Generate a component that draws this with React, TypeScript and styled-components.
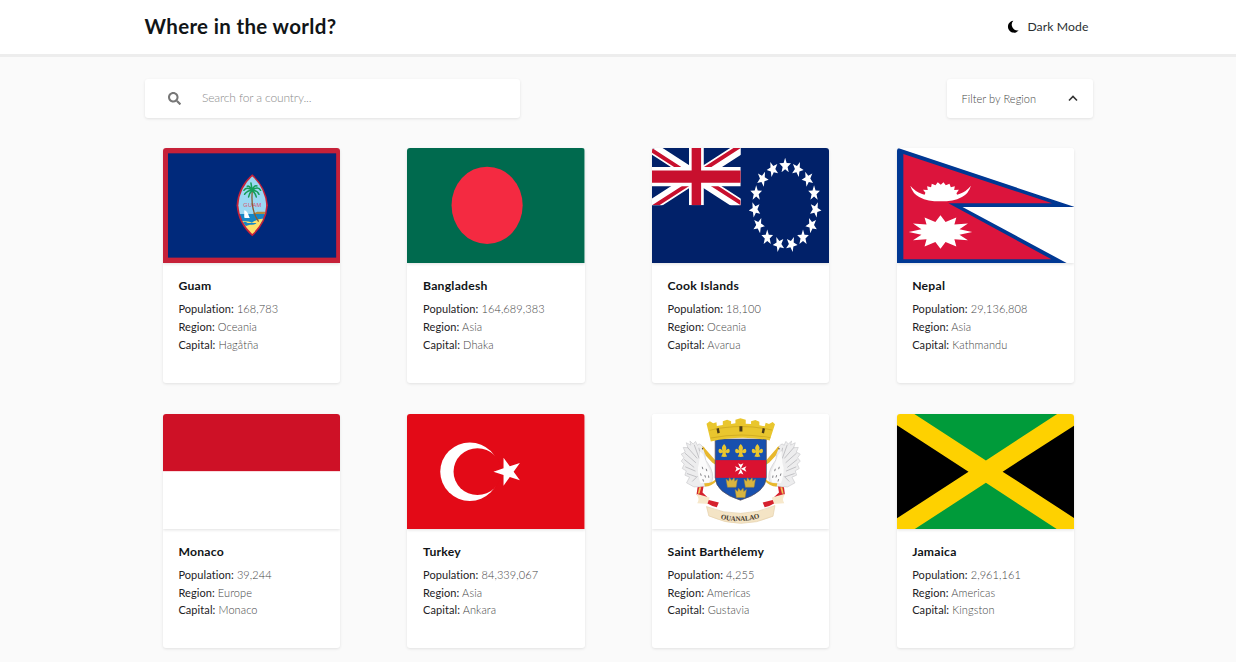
import React from "react";
import styled, { createGlobalStyle } from "styled-components";
import { FaSearch } from "react-icons/fa";

const GlobalStyle = createGlobalStyle`
  *, *::before, *::after { box-sizing: border-box; }
  html, body { margin: 0; height: 100%; overflow: hidden; }
  body {
    background: #fafafa;
    color: #111517;
    font-family: Lato, "Open Sans", sans-serif;
  }
`;

const Page = styled.div`
  height: 662px;
  overflow: hidden;
`;

const Header = styled.header`
  height: 57px;
  padding: 0 147.5px 3px 144.5px;
  border-bottom: 3px solid #ededed;
  background: #fff;
  display: flex;
  align-items: center;
  justify-content: space-between;
`;

const Title = styled.h1`
  margin: 0;
  font-size: 20.5px;
  line-height: 28px;
  font-weight: 700;
  letter-spacing: 0.34px;
  white-space: nowrap;
`;

const ModeToggle = styled.button`
  border: 0;
  padding: 2px 0 0;
  background: none;
  font-family: inherit;
  font-size: 12.2px;
  line-height: 18px;
  letter-spacing: 0.1px;
  color: #2b2f32;
  display: flex;
  align-items: center;
  gap: 8px;
  white-space: nowrap;
`;

const Toolbar = styled.div`
  padding: 22px 143px 0 145px;
  display: flex;
  justify-content: space-between;
`;

const Field = styled.div<{ $width: number }>`
  width: ${(p) => p.$width}px;
  height: 39px;
  border-radius: 3px;
  background: #fff;
  box-shadow: 0 1px 3px rgba(0, 0, 0, 0.1);
  display: flex;
  align-items: center;
`;

const SearchField = styled(Field)`
  padding: 0 0 1px 23px;
  gap: 21px;
  color: #777;
`;

const SearchInput = styled.input`
  border: 0;
  padding: 0;
  outline: 0;
  flex: 1;
  background: none;
  font: 300 12px/18px Lato, sans-serif;
  letter-spacing: -0.13px;
  &::placeholder { color: #8c8c8c; opacity: 1; }
`;

const RegionFilter = styled(Field)`
  padding: 0 15px 1px 15px;
  justify-content: space-between;
  font-size: 11px;
  font-weight: 300;
  letter-spacing: 0.06px;
  color: #444;
`;

const Grid = styled.main`
  padding: 30px 0 0 162.8px;
  display: grid;
  grid-template-columns: repeat(4, 177.5px);
  column-gap: 67.1px;
  row-gap: 31px;
`;

const Card = styled.article`
  height: 234.6px;
  border-radius: 3px;
  background: #fff;
  box-shadow: 0 1px 3px rgba(0, 0, 0, 0.1);
  overflow: hidden;
`;

const Flag = styled.svg`
  display: block;
  width: 100%;
  height: 115.3px;
  box-shadow: 0 1px 3px rgba(0, 0, 0, 0.12);
`;

const Details = styled.div`
  padding: 14px 0 0 15.6px;
`;

const Name = styled.h2`
  margin: 0 0 5px;
  font-size: 12.2px;
  line-height: 18px;
  font-weight: 700;
  letter-spacing: 0.24px;
  white-space: nowrap;
`;

const Fact = styled.p`
  margin: 0;
  font-size: 11px;
  line-height: 17.7px;
  font-weight: 300;
  letter-spacing: 0.08px;
  color: #444;
  white-space: nowrap;
`;

const Label = styled.span`
  font-weight: 400;
  color: #1d2124;
`;

function starPoints(cx: number, cy: number, r: number, start = -90, tips = 5, ratio = 0.382) {
  return Array.from({ length: tips * 2 }, (_, i) => {
    const a = ((start + (i * 180) / tips) * Math.PI) / 180;
    const q = i % 2 ? r * ratio : r;
    return `${(cx + q * Math.cos(a)).toFixed(2)},${(cy + q * Math.sin(a)).toFixed(2)}`;
  }).join(" ");
}

const MoonIcon = () => (
  <svg width="12" height="13" viewBox="0 0 36 39" fill="#000">
    <path d="M19 2A18 18 0 1 0 35 31A17.500 17.500 0 0 1 19 2Z" />
  </svg>
);

const GuamFlag = () => (
  <Flag viewBox="24 24 531 346" preserveAspectRatio="none">
    <rect x="24" y="24" width="531" height="346" fill="#c62139" />
    <rect x="39" y="40" width="503" height="313" fill="#00297b" />
    <clipPath id="seal"><path d="M291 109Q329 144 333 196Q329 247 291 282Q253 247 249 196Q253 144 291 109Z" /></clipPath>
    <path d="M291 103Q333 140 338 196Q333 252 291 289Q248 252 244 196Q248 140 291 103Z" fill="#c62139" />
    <g clipPath="url(#seal)">
      <rect x="244" y="103" width="94" height="120" fill="#9bd8f2" />
      <rect x="244" y="222" width="94" height="30" fill="#1686c6" />
      <path d="M293 221L306 215H338V222H293Z" fill="#b48b3c" />
      <path d="M244 244Q278 241 290 248Q312 232 338 237V292H244Z" fill="#ffe06a" />
      <path d="M258 247Q270 243 277 249L304 249Q297 256 284 254L272 258Z" fill="#1686c6" />
      <path d="M267 230V211Q276 211 282 231L284 234H268Z" fill="#fff" />
      <text x="264" y="202" fontFamily="Liberation Sans" fontSize="17" textLength="54" fill="#dc4f6c">GUAM</text>
      <path d="M291 153Q286 211 310 245" fill="none" stroke="#8b5c32" strokeWidth="4" />
      <g fill="none" stroke="#159c57" strokeWidth="4.5" strokeLinecap="round">
        <path d="M291 151Q274 139 266 151M291 151Q309 137 316 151M291 151Q277 151 268 163M291 151Q307 151 311 163M291 151Q281 160 280 171M291 151Q301 160 303 171M291 151L287 129M291 151Q281 135 276 139M291 151Q297 134 305 138" />
      </g>
    </g>
  </Flag>
);

const BangladeshFlag = () => (
  <Flag viewBox="21 24 534 346" preserveAspectRatio="none">
    <rect x="21" y="24" width="534" height="346" fill="#006a4e" />
    <ellipse cx="262" cy="196" rx="107" ry="116" fill="#f42a41" />
  </Flag>
);

const CookIslandsFlag = () => (
  <Flag viewBox="21 24 534 346" preserveAspectRatio="none">
    <rect x="21" y="24" width="534" height="346" fill="#012169" />
    <svg x="21" y="24" width="267" height="172" viewBox="0 0 60 30" preserveAspectRatio="none">
      <clipPath id="saltire"><path d="M30 15H60V30ZM30 15V30H0ZM30 15H0V0ZM30 15V0H60Z" /></clipPath>
      <path d="M0 0L60 30M60 0L0 30" stroke="#fff" strokeWidth="6.4" />
      <path d="M0 0L60 30M60 0L0 30" stroke="#c8102e" strokeWidth="4.4" clipPath="url(#saltire)" />
      <path d="M30 0V30M0 15H60" stroke="#fff" strokeWidth="10" />
      <path d="M30 0V30M0 15H60" stroke="#c8102e" strokeWidth="6.4" />
    </svg>
    <g transform="translate(421.5 196.5) scale(1 1.3)" fill="#fff">
      {Array.from({ length: 15 }, (_, i) => (
        <polygon key={i} points={starPoints(0, -91.5, 18.5, -90, 5, 0.42)} transform={`rotate(${i * 24})`} />
      ))}
    </g>
  </Flag>
);

const NepalFlag = () => (
  <Flag viewBox="36 24 531 346" preserveAspectRatio="none">
    <rect x="36" y="24" width="531" height="346" fill="#fff" />
    <path d="M36 23L567 201H232L545 370H36Z" fill="#003893" />
    <path d="M55 42L500 190H190L498 358H55Z" fill="#dc143c" />
    <path d="M76 137Q101 170 167 170Q233 170 257 137Q245 184 166 184Q88 184 76 137Z" fill="#fff" />
    <path d="M117 168L121 158L114 149L128 150L126 139L138 142L140 131L151 136L158 127L167 134L175 127L182 136L193 131L197 142L209 139L207 150L221 149L214 160L217 168Q167 184 117 168Z" fill="#fff" />
    <g transform="translate(166 276) scale(1 .53)">
      <polygon points={starPoints(0, 0, 95, -90, 12, 0.62)} fill="#fff" />
    </g>
  </Flag>
);

const MonacoFlag = () => (
  <Flag viewBox="0 0 534 345" preserveAspectRatio="none">
    <rect width="534" height="345" fill="#fff" />
    <rect width="534" height="171" fill="#ce1126" />
  </Flag>
);

const TurkeyFlag = () => (
  <Flag viewBox="21 26 534 345" preserveAspectRatio="none">
    <rect x="21" y="26" width="534" height="345" fill="#e30a17" />
    <ellipse cx="210" cy="198.5" rx="89" ry="87.5" fill="#fff" />
    <ellipse cx="233" cy="198.5" rx="72" ry="70" fill="#e30a17" />
    <polygon points={starPoints(325, 198.5, 44, 180)} fill="#fff" />
  </Flag>
);

const Pelican = () => (
  <g>
    <path d="M97 108Q87 97 83 106L77 94L70 102L60 93L63 105L49 98L54 113L40 112L46 126L34 132L42 143L34 153L43 162L37 175L49 182L45 195L59 201L50 218L72 230L99 229Q119 229 127 211Q133 190 117 164Q104 151 105 133Q109 118 97 108Z" fill="#ededee" stroke="#c9c9cc" strokeWidth="2" />
    <path d="M53 112L82 145M45 129L78 158M43 148L73 172M46 170L77 183M51 190L80 200M73 104L88 145M87 113L93 142M67 214L83 198" fill="none" stroke="#b9b9bd" strokeWidth="2.5" />
    <path d="M89 122Q91 151 84 173Q84 200 92 219L118 216Q129 194 112 166L100 133Z" fill="#fbfbfb" />
    <path d="M97 170L99 177M109 176L111 183M92 190L94 197M105 195L107 202M116 196L117 203M99 207L101 214" stroke="#68686c" strokeWidth="2.5" />
    <path d="M97 110Q101 107 106 116L137 151V164L127 157L108 137Z" fill="#e8b82d" />
    <path d="M103 219Q126 220 137 208L139 213Q127 228 105 229Z" fill="#e8b82d" />
    <circle cx="98" cy="116" r="2" fill="#443a30" />
  </g>
);

const RibbonEnd = () => (
  <g>
    <path d="M83 231L101 229L98 247L114 262L105 270L80 253Z" fill="#d5212e" />
    <path d="M88 231L94 231L89 250L84 251Z" fill="#f0c75a" />
    <path d="M79 251L119 262L116 281L82 279Q91 267 79 251Z" fill="#f7e8cb" />
    <path d="M117 269L147 277L141 291Q125 288 113 280Z" fill="#d5212e" />
  </g>
);

const crown = "M-17 -10L-9 -4L-7 -14L0 -6L7 -14L9 -4L17 -10L13 14H-13Z";
const lily = "M0 -20Q11 -9 4 0Q16 -12 17 1Q17 9 8 7L5 5L5 10L9 17L0 19L-9 17L-5 10L-5 5L-8 7Q-17 9 -17 1Q-16 -12 -4 0Q-11 -9 0 -20Z";

const SaintBarthFlag = () => (
  <Flag viewBox="-54 12 534 345" preserveAspectRatio="none">
    <rect x="-54" y="12" width="534" height="345" fill="#fff" />
    <Pelican />
    <RibbonEnd />
    <g transform="matrix(-1 0 0 1 426 0)">
      <Pelican />
      <RibbonEnd />
    </g>
    <path d="M110 289Q212 331 316 286L310 318Q213 361 117 317Z" fill="#f4e4c5" stroke="#e4cfa9" strokeWidth="2" />
    <path id="motto" d="M152 325Q213 342 277 320" fill="none" />
    <text fontFamily="Liberation Serif" fontWeight="700" fontSize="21" fill="#43382c">
      <textPath href="#motto" textLength="120">OUANALAO</textPath>
    </text>
    <path d="M136 87H290V202Q288 247 212 270Q138 247 136 202Z" fill="#1850ae" stroke="#594b50" strokeWidth="2" />
    <rect x="137" y="150" width="152" height="53" fill="#da1230" />
    <path d="M110 41L120 34L130 40L140 37L141 48L159 45V34L172 29L184 34V42L197 40V29L212 25L228 29V41L244 42V34L257 30L269 35V46L285 49L288 38L298 42L309 36L316 43L300 91Q213 74 123 94Z" fill="#e9c62e" />
    <path d="M119 61Q213 39 307 60M123 84Q213 66 302 83" stroke="#d3ae23" strokeWidth="3" fill="none" />
    <path d="M140 56L147 54L150 68L143 70ZM209 49H218V64H209ZM279 54L286 56L283 70L276 68Z" fill="#4a3b18" />
    {[163, 213, 263].map((x) => (
      <path key={x} d={lily} transform={`translate(${x} 122)`} fill="#e9c62e" />
    ))}
    <path d="M213 176L205 159L213 163L221 159ZM213 176L230 168L226 176L230 185ZM213 176L221 193L213 189L205 193ZM213 176L196 185L200 176L196 168Z" fill="#fff" />
    <g fill="#d8b540" stroke="#a88b35" strokeWidth="1.5">
      <path d={crown} transform="translate(186 217)" />
      <path d={crown} transform="translate(240 217)" />
      <path d={crown} transform="translate(213 248)" />
    </g>
  </Flag>
);

const JamaicaFlag = () => (
  <Flag viewBox="36 26 531 345" preserveAspectRatio="none">
    <rect x="36" y="26" width="531" height="345" fill="#fed100" />
    <path d="M88 26H515L302 165ZM88 371H515L302 232Z" fill="#009b3a" />
    <path d="M36 60L250 198.500L36 338ZM567 60L352 198.500L567 338Z" fill="#000" />
  </Flag>
);

const countries = [
  { name: "Guam", population: "168,783", region: "Oceania", capital: "Hagåtña", Art: GuamFlag },
  { name: "Bangladesh", population: "164,689,383", region: "Asia", capital: "Dhaka", Art: BangladeshFlag },
  { name: "Cook Islands", population: "18,100", region: "Oceania", capital: "Avarua", Art: CookIslandsFlag },
  { name: "Nepal", population: "29,136,808", region: "Asia", capital: "Kathmandu", Art: NepalFlag },
  { name: "Monaco", population: "39,244", region: "Europe", capital: "Monaco", Art: MonacoFlag },
  { name: "Turkey", population: "84,339,067", region: "Asia", capital: "Ankara", Art: TurkeyFlag },
  { name: "Saint Barthélemy", population: "4,255", region: "Americas", capital: "Gustavia", Art: SaintBarthFlag },
  { name: "Jamaica", population: "2,961,161", region: "Americas", capital: "Kingston", Art: JamaicaFlag },
];

export default function App() {
  return (
    <Page>
      <GlobalStyle />
      <Header>
        <Title>Where in the world?</Title>
        <ModeToggle>
          <MoonIcon />
          Dark Mode
        </ModeToggle>
      </Header>
      <Toolbar>
        <SearchField $width={375}>
          <FaSearch size={13} />
          <SearchInput placeholder="Search for a country..." />
        </SearchField>
        <RegionFilter $width={146.5}>
          Filter by Region
          <svg width="10" height="7" viewBox="0 0 10 7" fill="none" stroke="#333" strokeWidth="1.6">
            <path d="M1 5.500L5 1.500L9 5.500" />
          </svg>
        </RegionFilter>
      </Toolbar>
      <Grid>
        {countries.map(({ name, population, region, capital, Art }) => (
          <Card key={name}>
            <Art />
            <Details>
              <Name>{name}</Name>
              <Fact><Label>Population:</Label> {population}</Fact>
              <Fact><Label>Region:</Label> {region}</Fact>
              <Fact><Label>Capital:</Label> {capital}</Fact>
            </Details>
          </Card>
        ))}
      </Grid>
    </Page>
  );
}
